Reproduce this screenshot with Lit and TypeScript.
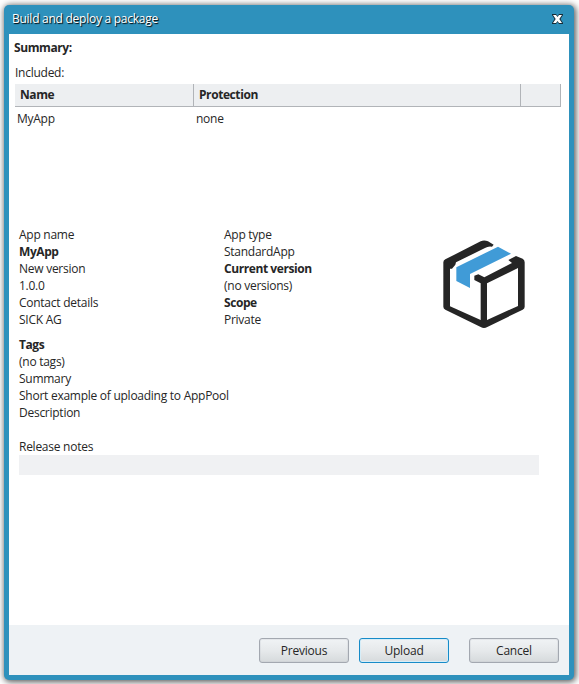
import { LitElement, html, css } from "lit";
import { customElement } from "lit/decorators.js";

@customElement("package-icon")
class PackageIcon extends LitElement {
  static styles = css`
    :host { display: block; width: 110px; height: 110px; }
    svg { display: block; width: 110px; height: 110px; }
  `;
  render() {
    return html`<svg viewBox="0 0 330 330">
      <path fill="#252525" fill-rule="evenodd" d="M152 34Q162 29 174 34L191 44L186 50Q174 48 165 54L78 97L76 104L66 116H60V229L152 270V160L133 150V137L145 133L163 142L246 99L235 90L258 78L278 86Q284 89 284 97V230Q284 236 278 239L172 291Q162 297 152 291L46 239Q40 236 40 230V97Q40 91 46 88ZM171 160V270L264 228V114Z"/>
      <path fill="#409bd7" d="M204 50L243 71L120 132V174L79 153V112Z"/>
    </svg>`;
  }
}

@customElement("app-root")
class AppRoot extends LitElement {
  static styles = css`
    :host {
      display: block; box-sizing: border-box; height: 684px; overflow: hidden;
      padding: 5px 5px 4px 4px; background: #fff; color: #262626;
      font: 12px/17px "Open Sans", sans-serif; letter-spacing: -0.26px;
    }
    * { box-sizing: border-box; }
    .window {
      display: flex; flex-direction: column; height: 675px; width: 570px;
      padding: 0 5px 5px; border-radius: 5px; background: #2e91bc;
      box-shadow: 1px 1px 6px 1px rgba(0, 0, 0, 0.65);
    }
    .title {
      display: flex; justify-content: space-between; height: 29px; flex: none;
      padding: 5px 6px 0 3px; color: #fff; text-shadow: 1px 1px 1px #000;
    }
    .close { width: 11px; height: 10px; margin-top: 4px; display: block; }
    .body { flex: 1; background: #fff; padding: 5px 8px 0 6px; }
    .heading { margin-left: -1px; }
    b { font-weight: 700; letter-spacing: -0.42px; }
    .included { margin-top: 8px; height: 20px; }
    .row { display: grid; grid-template-columns: 179px 327px 40px; }
    .head { height: 23px; background: #edeff1; border-bottom: 1px solid #b1b4b8; }
    .head > * { border-right: 1px solid #b1b4b8; padding: 2px 0 0 5px; }
    .data { padding: 3px 0 0 2px; height: 119px; }
    .info { display: grid; grid-template-columns: 205px 206px 110px; margin-left: 4px; height: 110px; }
    .lines { display: flex; flex-direction: column; }
    .info package-icon { margin-top: 4px; }
    .blank { height: 17px; }
    .details { margin-left: 4px; }
    .notes { width: 520px; height: 20px; background: #f0f1f3; }
    .footer {
      display: flex; height: 50px; flex: none; background: #eef2f5;
      justify-content: flex-end; padding: 13px 10px 0 0; gap: 10px;
    }
    button {
      width: 90px; height: 25px; border: 1px solid #a3a8b0; border-radius: 3px; padding: 0;
      background: linear-gradient(#f0f3f5, #e6e9eb 50%, #d6dadc); color: #262626;
      font: inherit; letter-spacing: -0.2px; box-shadow: inset 0 0 0 1px rgba(190, 196, 202, 0.25);
    }
    .primary { border-color: #168bc8; box-shadow: inset 0 0 0 1px #d5edf8; }
    .cancel { margin-left: 10px; }
  `;
  render() {
    return html`<div class="window">
      <div class="title"><span>Build and deploy a package</span>
        <svg class="close" viewBox="0 0 11 10">
          <path fill="#172c37" d="M0 0H4L5.5 2L7 0H11V1L8.500 5L11 9V10H7L5.500 8L4 10H0V9L2.500 5L0 1Z"/>
          <path fill="#fff" d="M1 1H4L5.500 3L7 1H10L7.300 5L10 9H7L5.500 7L4 9H1L3.700 5Z"/>
        </svg>
      </div>
      <div class="body">
        <div class="heading"><b>Summary:</b></div>
        <div class="included">Included:</div>
        <div class="row head"><b>Name</b><b>Protection</b><span></span></div>
        <div class="row data"><span>MyApp</span><span>none</span></div>
        <div class="info">
          <div class="lines"><span>App name</span><b>MyApp</b><span>New version</span><span>1.0.0</span><span>Contact details</span><span>SICK AG</span></div>
          <div class="lines"><span>App type</span><span>StandardApp</span><b>Current version</b><span>(no versions)</span><b>Scope</b><span>Private</span></div>
          <package-icon></package-icon>
        </div>
        <div class="lines details"><b>Tags</b><span>(no tags)</span><span>Summary</span><span>Short example of uploading to AppPool</span><span>Description</span><span class="blank"></span><span>Release notes</span><div class="notes"></div></div>
      </div>
      <div class="footer"><button>Previous</button><button class="primary">Upload</button><button class="cancel">Cancel</button></div>
    </div>`;
  }
}
